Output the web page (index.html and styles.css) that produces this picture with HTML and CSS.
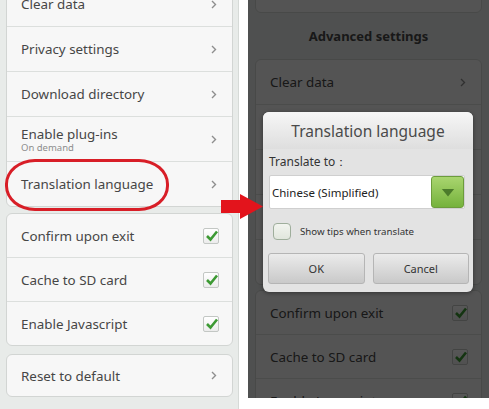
FILE: index.html
```html
<!DOCTYPE html>
<html lang="en">
<head>
    <meta charset="UTF-8">
    <title>Translation language</title>
    <link rel="stylesheet" href="styles.css">
</head>
<body>

    <div class="screen">

        <!-- Settings list, before -->
        <section class="panel panel-left">
            <div class="list list-left">
                <div class="card">
                    <div class="row"><span class="label">Clear data</span><svg class="chevron" viewBox="0 0 6 9"><polyline points="1,1 4.5,4.5 1,8"/></svg></div>
                    <div class="row"><span class="label">Privacy settings</span><svg class="chevron" viewBox="0 0 6 9"><polyline points="1,1 4.5,4.5 1,8"/></svg></div>
                    <div class="row"><span class="label">Download directory</span><svg class="chevron" viewBox="0 0 6 9"><polyline points="1,1 4.5,4.5 1,8"/></svg></div>
                    <div class="row">
                        <span class="label-group">
                            <span class="label">Enable plug-ins</span>
                            <span class="sub">On demand</span>
                        </span>
                        <svg class="chevron" viewBox="0 0 6 9"><polyline points="1,1 4.5,4.5 1,8"/></svg>
                    </div>
                    <div class="row"><span class="label">Translation language</span><svg class="chevron" viewBox="0 0 6 9"><polyline points="1,1 4.5,4.5 1,8"/></svg></div>
                </div>

                <div class="card card-checks">
                    <div class="row"><span class="label">Confirm upon exit</span><span class="check"><svg viewBox="0 0 18 18"><polyline points="4,9 7.5,12.5 14,4.5"/></svg></span></div>
                    <div class="row"><span class="label">Cache to SD card</span><span class="check"><svg viewBox="0 0 18 18"><polyline points="4,9 7.5,12.5 14,4.5"/></svg></span></div>
                    <div class="row"><span class="label">Enable Javascript</span><span class="check"><svg viewBox="0 0 18 18"><polyline points="4,9 7.5,12.5 14,4.5"/></svg></span></div>
                </div>

                <div class="card card-reset">
                    <div class="row"><span class="label">Reset to default</span><svg class="chevron" viewBox="0 0 6 9"><polyline points="1,1 4.5,4.5 1,8"/></svg></div>
                </div>
            </div>
            <div class="highlight"></div>
        </section>

        <!-- Settings list, after tapping -->
        <section class="panel panel-right">
            <div class="list list-right">
                <div class="card card-top"></div>
                <h3 class="group-title">Advanced settings</h3>
                <div class="card">
                    <div class="row"><span class="label">Clear data</span><svg class="chevron" viewBox="0 0 6 9"><polyline points="1,1 4.5,4.5 1,8"/></svg></div>
                    <div class="row"><span class="label">Privacy settings</span><svg class="chevron" viewBox="0 0 6 9"><polyline points="1,1 4.5,4.5 1,8"/></svg></div>
                    <div class="row"><span class="label">Download directory</span><svg class="chevron" viewBox="0 0 6 9"><polyline points="1,1 4.5,4.5 1,8"/></svg></div>
                    <div class="row"><span class="label">Enable plug-ins</span><svg class="chevron" viewBox="0 0 6 9"><polyline points="1,1 4.5,4.5 1,8"/></svg></div>
                    <div class="row"><span class="label">Translation language</span><svg class="chevron" viewBox="0 0 6 9"><polyline points="1,1 4.5,4.5 1,8"/></svg></div>
                </div>
                <div class="card card-checks card-checks-right">
                    <div class="row"><span class="label">Confirm upon exit</span><span class="check"><svg viewBox="0 0 18 18"><polyline points="4,9 7.5,12.5 14,4.5"/></svg></span></div>
                    <div class="row"><span class="label">Cache to SD card</span><span class="check"><svg viewBox="0 0 18 18"><polyline points="4,9 7.5,12.5 14,4.5"/></svg></span></div>
                    <div class="row"><span class="label">Enable Javascript</span><span class="check"><svg viewBox="0 0 18 18"><polyline points="4,9 7.5,12.5 14,4.5"/></svg></span></div>
                </div>
            </div>
            <div class="dim"></div>

            <div class="dialog">
                <div class="dialog-title">Translation language</div>
                <div class="dialog-body">
                    <div class="field-label">Translate to：</div>
                    <div class="select">
                        <span class="select-value">Chinese (Simplified)</span>
                        <span class="select-btn"><svg viewBox="0 0 16 10"><polygon points="1,1 15,1 8,9.5"/></svg></span>
                    </div>
                    <label class="tips">
                        <span class="tips-box"></span>
                        <span>Show tips when translate</span>
                    </label>
                </div>
                <div class="dialog-buttons">
                    <button type="button">OK</button>
                    <button type="button">Cancel</button>
                </div>
            </div>
        </section>

    </div>

    <svg class="arrow" viewBox="0 0 44 27"><polygon points="1,7 20,7 20,1 43,13.5 20,26 20,20 1,20"/></svg>

</body>
</html>
```

FILE: styles.css
```css
* {
    box-sizing: border-box;
}

body {
    font-family: 'Noto Sans', 'Open Sans', sans-serif;
    margin: 0;
    width: 489px;
    height: 409px;
    overflow: hidden;
    background: #fff;
    position: relative;
}

.screen {
    display: flex;
    height: 409px;
}

.panel {
    position: relative;
    overflow: hidden;
    background: #e8ebe9;
}

.panel-left {
    width: 239px;
    height: 409px;
    border-right: 1px solid #d6dad7;
}

.panel-right {
    width: 241px;
    height: 398px;
    margin-left: 9px;
}

.list-left {
    margin-top: -19px;
    padding: 0 5px 0 6px;
}

.list-right {
    padding: 0 7px;
}

.card {
    background: #f7f7f7;
    border: 1px solid #d2d5d3;
    border-radius: 6px;
}

.row {
    height: 45px;
    display: flex;
    align-items: center;
    justify-content: space-between;
    padding: 0 15px 0 14px;
    border-top: 1px solid #dcdfdd;
}

    .row:first-child {
        height: 44px;
        border-top: none;
    }

.label {
    font-size: 13.4px;
    color: #464646;
}

.label-group {
    display: flex;
    flex-direction: column;
    line-height: 1.2;
    padding-top: 1px;
}

.sub {
    font-size: 9.5px;
    color: #8d8d8d;
}

.chevron {
    width: 6px;
    height: 9px;
    fill: none;
    stroke: #8e8e8e;
    stroke-width: 1.4;
}

.card-checks {
    margin-top: 6px;
}

    .card-checks .row {
        height: 44px;
        padding-right: 13px;
    }

    .card-checks .row:first-child {
        height: 43px;
    }

.check {
    width: 16px;
    height: 16px;
    border: 1px solid #c3c7c4;
    border-radius: 2px;
    background: linear-gradient(#ffffff, #ececec);
    position: relative;
}

    .check svg {
        position: absolute;
        left: -1px;
        top: -2px;
        width: 18px;
        height: 18px;
        fill: none;
        stroke: #3d9a34;
        stroke-width: 2.6;
    }

.card-reset {
    margin-top: 8px;
}

    .card-reset .row:first-child {
        height: 41px;
    }

.highlight {
    position: absolute;
    left: 5px;
    top: 159px;
    width: 164px;
    height: 52px;
    border: 3px solid #d81e27;
    border-radius: 30px / 25px;
}

.card-top {
    height: 42px;
    margin-top: -29px;
}

.group-title {
    margin: 0;
    height: 46px;
    display: flex;
    align-items: center;
    justify-content: center;
    font-size: 13px;
    font-weight: bold;
    color: #484848;
}

.card-checks-right {
    margin-top: 5px;
}

.dim {
    position: absolute;
    inset: 0;
    background: rgba(0, 0, 0, 0.66);
}

.dialog {
    position: absolute;
    left: 15px;
    top: 112px;
    width: 210px;
    height: 180px;
    background: #e3e3e3;
    border-radius: 6px;
    box-shadow: 0 1px 4px rgba(0,0,0,0.4);
    overflow: hidden;
}

.dialog-title {
    height: 37px;
    display: flex;
    align-items: center;
    justify-content: center;
    font-size: 15.5px;
    color: #4a4a4a;
    background: linear-gradient(#f6f6f6, #dedede);
}

.dialog-body {
    padding: 0 8px 0 6px;
}

.field-label {
    height: 26px;
    line-height: 26px;
    font-size: 12px;
    color: #333;
}

.select {
    height: 34px;
    background: #fff;
    border: 1px solid #cfcfcf;
    border-radius: 2px;
    display: flex;
    align-items: center;
    justify-content: space-between;
    padding: 0 0 0 2px;
}

.select-value {
    font-size: 11.5px;
    color: #222;
}

.select-btn {
    width: 33px;
    height: 32px;
    display: flex;
    align-items: center;
    justify-content: center;
    background: linear-gradient(#a9d56f, #75b23c);
    border: 1px solid #6c9c3c;
    border-radius: 3px;
}

    .select-btn svg {
        width: 14px;
        height: 9px;
        fill: #4c7b2b;
    }

.tips {
    display: flex;
    align-items: center;
    margin-top: 14px;
    padding-left: 4px;
    height: 17px;
    font-size: 9.7px;
    color: #333;
}

.tips-box {
    width: 18px;
    height: 17px;
    margin-right: 9px;
    border: 1px solid #9fae9c;
    border-radius: 4px;
    background: linear-gradient(#f2f4ef, #e1e6dd);
}

.dialog-buttons {
    display: flex;
    gap: 8px;
    padding: 13px 4px 0 5px;
}

    .dialog-buttons button {
        flex: 1;
        height: 31px;
        font-family: inherit;
        font-size: 11px;
        color: #333;
        background: linear-gradient(#ebebeb, #c9c9c9);
        border: 1px solid #b5b5b5;
        border-radius: 3px;
    }

.arrow {
    position: absolute;
    left: 220px;
    top: 193px;
    width: 44px;
    height: 27px;
    fill: #e3141c;
}
```
